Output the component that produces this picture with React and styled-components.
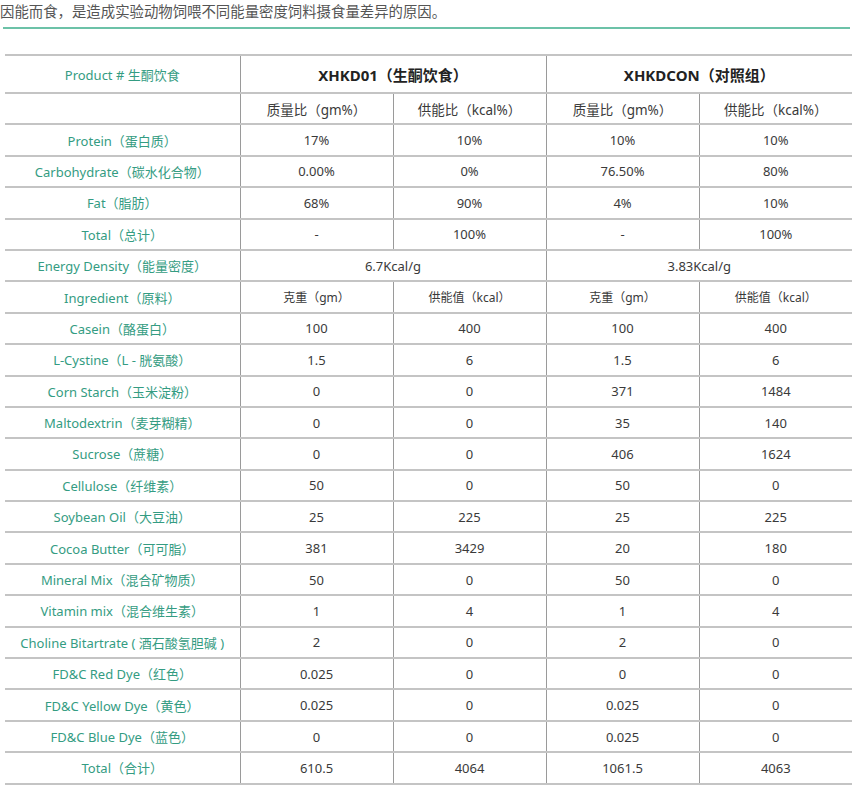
import styled, { createGlobalStyle } from "styled-components";

const GlobalStyle = createGlobalStyle`
  body {
    margin: 0;
    background: #fff;
    font-family: "Noto Sans", "Noto Sans CJK SC", sans-serif;
  }
`;

const nutrients = [
  ["Protein（蛋白质）", "17%", "10%", "10%", "10%"],
  ["Carbohydrate（碳水化合物）", "0.00%", "0%", "76.50%", "80%"],
  ["Fat（脂肪）", "68%", "90%", "4%", "10%"],
  ["Total（总计）", "-", "100%", "-", "100%"],
];

const ingredients = [
  ["Casein（酪蛋白）", "100", "400", "100", "400"],
  ["L-Cystine（L - 胱氨酸）", "1.5", "6", "1.5", "6"],
  ["Corn Starch（玉米淀粉）", "0", "0", "371", "1484"],
  ["Maltodextrin（麦芽糊精）", "0", "0", "35", "140"],
  ["Sucrose（蔗糖）", "0", "0", "406", "1624"],
  ["Cellulose（纤维素）", "50", "0", "50", "0"],
  ["Soybean Oil（大豆油）", "25", "225", "25", "225"],
  ["Cocoa Butter（可可脂）", "381", "3429", "20", "180"],
  ["Mineral Mix（混合矿物质）", "50", "0", "50", "0"],
  ["Vitamin mix（混合维生素）", "1", "4", "1", "4"],
  ["Choline Bitartrate ( 酒石酸氢胆碱 )", "2", "0", "2", "0"],
  ["FD&C Red Dye（红色）", "0.025", "0", "0", "0"],
  ["FD&C Yellow Dye（黄色）", "0.025", "0", "0.025", "0"],
  ["FD&C Blue Dye（蓝色）", "0", "0", "0.025", "0"],
  ["Total（合计）", "610.5", "4064", "1061.5", "4063"],
];

const Page = styled.div`
  width: 860px;
  color: #333;
`;

const Intro = styled.p`
  margin: 0;
  font-size: 14.4px;
  line-height: 24px;
  color: #555;
`;

const Rule = styled.div`
  margin: 3px 0 0 3px;
  width: 847px;
  height: 2px;
  background: #6cc2a8;
`;

const Table = styled.table`
  margin: 25px 0 0 5px;
  width: 847px;
  border-collapse: collapse;
  table-layout: fixed;
  border-top: 2px solid #c4c4c4;
`;

const Row = styled.tr`
  height: ${(p) => (p.$tall ? "38px" : "31.4px")};
`;

const sizes = { head: "15px", sub: "13.5px", small: "12px" };

const Cell = styled.td`
  padding: 0 4px;
  text-align: center;
  vertical-align: middle;
  font-size: ${(p) => sizes[p.$size] || "13px"};
  font-weight: ${(p) => (p.$size === "head" ? 700 : 400)};
  color: ${(p) => (p.$size === "head" ? "#222" : "#3a3a3a")};
  border-bottom: 2px solid #c4c4c4;
  border-left: 1px solid #9a9a9a;
  white-space: nowrap;
`;

const Label = styled(Cell)`
  color: #349c82;
  border-left: none;
`;

const Col = styled.col`
  width: ${(p) => p.$w}px;
`;

const DataRow = ({ cells }) => (
  <Row>
    <Label>{cells[0]}</Label>
    {cells.slice(1).map((v, i) => (
      <Cell key={i}>{v}</Cell>
    ))}
  </Row>
);

export default function App() {
  return (
    <Page>
      <GlobalStyle />
      <Intro>因能而食，是造成实验动物饲喂不同能量密度饲料摄食量差异的原因。</Intro>
      <Rule />
      <Table>
        <colgroup>
          <Col $w={235} />
          <Col $w={153} />
          <Col $w={153} />
          <Col $w={153} />
          <Col $w={153} />
        </colgroup>
        <tbody>
          <Row $tall>
            <Label>Product # 生酮饮食</Label>
            <Cell colSpan={2} $size="head">XHKD01（生酮饮食）</Cell>
            <Cell colSpan={2} $size="head">XHKDCON（对照组）</Cell>
          </Row>
          <Row>
            <Label />
            <Cell $size="sub">质量比（gm%）</Cell>
            <Cell $size="sub">供能比（kcal%）</Cell>
            <Cell $size="sub">质量比（gm%）</Cell>
            <Cell $size="sub">供能比（kcal%）</Cell>
          </Row>
          {nutrients.map((r) => (
            <DataRow key={r[0]} cells={r} />
          ))}
          <Row>
            <Label>Energy Density（能量密度）</Label>
            <Cell colSpan={2}>6.7Kcal/g</Cell>
            <Cell colSpan={2}>3.83Kcal/g</Cell>
          </Row>
          <Row>
            <Label>Ingredient（原料）</Label>
            <Cell $size="small">克重（gm）</Cell>
            <Cell $size="small">供能值（kcal）</Cell>
            <Cell $size="small">克重（gm）</Cell>
            <Cell $size="small">供能值（kcal）</Cell>
          </Row>
          {ingredients.map((r) => (
            <DataRow key={r[0]} cells={r} />
          ))}
        </tbody>
      </Table>
    </Page>
  );
}
